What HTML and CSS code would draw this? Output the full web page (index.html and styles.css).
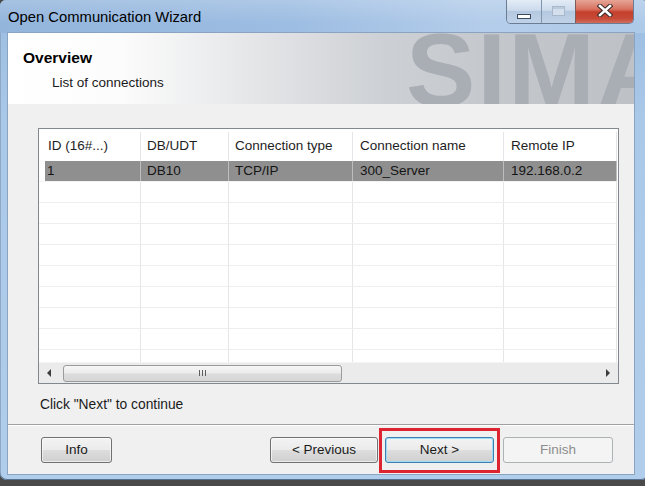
FILE: index.html
```html
<!DOCTYPE html>
<html>
<head>
<meta charset="utf-8">
<link rel="stylesheet" href="styles.css">
</head>
<body>
<div class="window">
  <div class="titlebar">
    <span class="title">Open Communication Wizard</span>
    <div class="caption">
      <div class="cb cb-min"><span class="min-glyph"></span></div>
      <div class="cb cb-max"><span class="max-glyph"></span></div>
      <div class="cb cb-close">
        <svg width="16" height="13" viewBox="0 0 16 13">
          <path d="M3 2 L13 11 M13 2 L3 11" stroke="#3b2b2b" stroke-width="4.6" stroke-linecap="square" fill="none"/>
          <path d="M3 2 L13 11 M13 2 L3 11" stroke="#ffffff" stroke-width="2.6" stroke-linecap="square" fill="none"/>
        </svg>
      </div>
    </div>
  </div>
  <div class="client">
    <div class="header">
      <div class="watermark">SIMA</div>
      <div class="h-title">Overview</div>
      <div class="h-sub">List of connections</div>
    </div>
    <div class="content">
      <div class="grid">
        <div class="row head">
          <div class="spacer"></div>
          <div class="cell c1">ID (16#...)</div>
          <div class="cell c2">DB/UDT</div>
          <div class="cell c3">Connection type</div>
          <div class="cell c4">Connection name</div>
          <div class="cell c5">Remote IP</div>
        </div>
        <div class="rows">
          <div class="row data selected">
            <div class="spacer"></div>
            <div class="cell c1">1</div>
            <div class="cell c2">DB10</div>
            <div class="cell c3">TCP/IP</div>
            <div class="cell c4">300_Server</div>
            <div class="cell c5">192.168.0.2</div>
          </div>
          <div class="row data"><div class="spacer"></div><div class="cell c1"></div><div class="cell c2"></div><div class="cell c3"></div><div class="cell c4"></div><div class="cell c5"></div></div>
          <div class="row data"><div class="spacer"></div><div class="cell c1"></div><div class="cell c2"></div><div class="cell c3"></div><div class="cell c4"></div><div class="cell c5"></div></div>
          <div class="row data"><div class="spacer"></div><div class="cell c1"></div><div class="cell c2"></div><div class="cell c3"></div><div class="cell c4"></div><div class="cell c5"></div></div>
          <div class="row data"><div class="spacer"></div><div class="cell c1"></div><div class="cell c2"></div><div class="cell c3"></div><div class="cell c4"></div><div class="cell c5"></div></div>
          <div class="row data"><div class="spacer"></div><div class="cell c1"></div><div class="cell c2"></div><div class="cell c3"></div><div class="cell c4"></div><div class="cell c5"></div></div>
          <div class="row data"><div class="spacer"></div><div class="cell c1"></div><div class="cell c2"></div><div class="cell c3"></div><div class="cell c4"></div><div class="cell c5"></div></div>
          <div class="row data"><div class="spacer"></div><div class="cell c1"></div><div class="cell c2"></div><div class="cell c3"></div><div class="cell c4"></div><div class="cell c5"></div></div>
          <div class="row data"><div class="spacer"></div><div class="cell c1"></div><div class="cell c2"></div><div class="cell c3"></div><div class="cell c4"></div><div class="cell c5"></div></div>
          <div class="row data"><div class="spacer"></div><div class="cell c1"></div><div class="cell c2"></div><div class="cell c3"></div><div class="cell c4"></div><div class="cell c5"></div></div>
        </div>
        <div class="hscroll">
          <div class="arrow-btn"><span class="tri-left"></span></div>
          <div class="thumb"><span class="grip"></span></div>
          <div class="track-rest"></div>
          <div class="arrow-btn"><span class="tri-right"></span></div>
        </div>
      </div>
      <div class="hint">Click "Next" to continue</div>
    </div>
    <div class="footer">
      <button class="btn btn-info">Info</button>
      <div class="nav">
        <button class="btn btn-prev">&lt; Previous</button>
        <div class="highlight"><button class="btn btn-next">Next &gt;</button></div>
        <button class="btn btn-finish" disabled>Finish</button>
      </div>
    </div>
  </div>
</div>
</body>
</html>
```

FILE: styles.css
```css
html, body {
  margin: 0;
  padding: 0;
}
body {
  width: 645px;
  height: 486px;
  overflow: hidden;
  background: #4a4a4a;
  font-family: "Liberation Sans", Arial, sans-serif;
  color: #1a1a1a;
}

.window {
  width: 648px;
  height: 480px;
  display: flex;
  flex-direction: column;
  background: linear-gradient(180deg, #a8c5e6 0px, #9fc0e3 33px, #aac8e8 120px, #b0cdeb 480px);
  border-radius: 6px 6px 7px 7px;
  box-shadow: inset 0 -1px 0 #56708f, inset 1px 0 0 #8ea9c8;
}

.titlebar {
  height: 33px;
  display: flex;
  align-items: flex-start;
  background:
    linear-gradient(180deg, rgba(255,255,255,0.18) 0%, rgba(255,255,255,0) 70%),
    linear-gradient(90deg, #93b5dc 0%, #9dbde2 45%, #b4cdea 75%, #aecae9 100%);
  border-radius: 6px 6px 0 0;
}
.title {
  padding-left: 8px;
  padding-top: 9px;
  font-size: 14.8px;
  line-height: 16px;
  color: #000;
}

.caption {
  margin-left: auto;
  margin-right: 14px;
  height: 24px;
  display: flex;
  border: 1px solid #6b7d95;
  border-top: none;
  border-radius: 0 0 5px 5px;
  overflow: hidden;
  box-sizing: border-box;
}
.cb {
  height: 100%;
  display: flex;
  align-items: center;
  justify-content: center;
  box-sizing: border-box;
}
.cb-min {
  width: 35px;
  background: linear-gradient(180deg, #e3ecf6 0%, #cbdaec 45%, #b4c8df 50%, #bfd2e8 100%);
  border-right: 1px solid #8095ae;
  align-items: flex-end;
}
.min-glyph {
  width: 12px;
  height: 3px;
  background: #fff;
  border: 1px solid #3a4a60;
  margin-bottom: 4px;
}
.cb-max {
  width: 34px;
  background: linear-gradient(180deg, #e3ecf6 0%, #cbdaec 45%, #b4c8df 50%, #bfd2e8 100%);
  border-right: 1px solid #7b5c5a;
}
.max-glyph {
  width: 11px;
  height: 8px;
  border: 1px solid #a9b8ca;
  background: #d3dfec;
  box-shadow: inset 0 2px 0 #bccbdc;
  margin-top: -2px;
}
.cb-close {
  width: 57px;
  background: linear-gradient(180deg, #e6a596 0%, #d9715f 40%, #c4402c 52%, #c64a37 80%, #d26c5c 100%);
}
.cb-close svg {
  margin-top: -3px;
}

.client {
  margin: 0 14px 0 8px;
  height: 441px;
  background: #f0f0f0;
  box-shadow: 0 0 0 1px #8aa3c1;
  display: flex;
  flex-direction: column;
}

.header {
  position: relative;
  height: 71px;
  overflow: hidden;
  background: linear-gradient(90deg, #ffffff 0%, #fcfcfc 18%, #e6e7e9 38%, #cdd0d4 60%, #c3c6cb 80%, #bec1c6 100%);
  padding-left: 15px;
  box-sizing: border-box;
}
.watermark {
  position: absolute;
  left: 398px;
  top: -15px;
  font-size: 104px;
  line-height: 1;
  font-weight: bold;
  color: #a9adb4;
  letter-spacing: 2px;
  white-space: nowrap;
}
.h-title {
  position: relative;
  padding-top: 16px;
  font-size: 15.5px;
  line-height: 18px;
  font-weight: bold;
  color: #000;
}
.h-sub {
  position: relative;
  padding-left: 29px;
  padding-top: 8px;
  font-size: 13.5px;
  line-height: 16px;
  color: #1a1a1a;
}

.content {
  padding: 24px 0 0 30px;
  flex: 1;
}

.grid {
  width: 581px;
  height: 256px;
  box-sizing: border-box;
  border: 1px solid #828790;
  background: #fff;
  display: flex;
  flex-direction: column;
}
.row {
  display: flex;
  flex-shrink: 0;
}
.spacer {
  width: 6px;
  flex-shrink: 0;
}
.cell {
  box-sizing: border-box;
  flex-shrink: 0;
  padding-left: 6px;
  font-size: 13.5px;
  white-space: nowrap;
  overflow: hidden;
  border-right: 1px solid #e6e6e6;
}
.c1 { width: 96px; padding-left: 3px; }
.c2 { width: 88px; }
.c3 { width: 124px; }
.c4 { width: 151px; padding-left: 7px; }
.c5 { width: 113px; padding-left: 7px; }

.head {
  height: 32px;
  align-items: stretch;
}
.head .cell {
  line-height: 32px;
  padding-top: 1px;
  border-right: none;
  background: linear-gradient(90deg, transparent calc(100% - 1px), #e3e5e8 calc(100% - 1px)) no-repeat 0 3px / 100% 100%;
  color: #1e1e1e;
}
.head .c1 { padding-left: 3px; }

.rows {
  height: 201px;
  overflow: hidden;
  display: flex;
  flex-direction: column;
}
.data {
  height: 21px;
  border-bottom: 1px solid #eeeeee;
  box-sizing: border-box;
}
.data .cell {
  line-height: 20px;
  height: 20px;
}
.selected {
  border-bottom: 1px solid #f2f2f2;
}
.selected .cell {
  background: #8f8f8f;
  border-right: 1px solid #bdbdbd;
  color: #151515;
}
.selected .c1 { padding-left: 2px; }

.hscroll {
  height: 21px;
  margin-top: auto;
  display: flex;
  align-items: center;
  background: #ebebeb;
  border-top: 1px solid #f4f4f4;
  box-sizing: border-box;
  padding: 0 1px 0 0;
}
.arrow-btn {
  width: 22px;
  height: 100%;
  display: flex;
  align-items: center;
  justify-content: center;
  flex-shrink: 0;
}
.tri-left {
  width: 0;
  height: 0;
  border-top: 4px solid transparent;
  border-bottom: 4px solid transparent;
  border-right: 4px solid #3d3d3d;
  margin-left: -2px;
}
.tri-right {
  width: 0;
  height: 0;
  border-top: 4px solid transparent;
  border-bottom: 4px solid transparent;
  border-left: 4px solid #3d3d3d;
  margin-left: 4px;
}
.thumb {
  width: 279px;
  height: 17px;
  margin-left: 2px;
  box-sizing: border-box;
  border: 1px solid #9b9b9b;
  border-radius: 3px;
  background: linear-gradient(180deg, #f6f6f6 0%, #ececec 45%, #dcdcdc 55%, #d6d6d6 100%);
  display: flex;
  align-items: center;
  justify-content: center;
}
.grip {
  width: 7px;
  height: 6px;
  background: repeating-linear-gradient(90deg, #5f5f5f 0 1px, transparent 1px 3px);
}
.track-rest {
  flex: 1;
}

.hint {
  margin-top: 13px;
  margin-left: 2px;
  font-size: 13.8px;
  line-height: 16px;
  color: #1a1a1a;
}

.footer {
  height: 50px;
  box-sizing: border-box;
  border-top: 1px solid #a0a0a0;
  box-shadow: inset 0 1px 0 #ffffff;
  display: flex;
  align-items: flex-start;
  padding: 12px 0 0 33px;
}
.nav {
  display: flex;
  align-items: center;
  margin-left: 158px;
}
.btn {
  height: 26px;
  box-sizing: border-box;
  border: 1px solid #707070;
  border-radius: 3px;
  background: linear-gradient(180deg, #f3f3f3 0%, #ebebeb 48%, #dddddd 52%, #cfcfcf 100%);
  box-shadow: inset 0 0 0 1px rgba(255,255,255,0.6);
  font-family: "Liberation Sans", Arial, sans-serif;
  font-size: 13.5px;
  color: #1a1a1a;
  padding: 0;
  line-height: 24px;
}
.btn-info { width: 71px; }
.btn-prev { width: 108px; }
.highlight {
  margin-left: 1px;
  padding: 6px 3px 7px 3px;
  border: 3px solid #dc2530;
  margin-top: -9px;
  margin-bottom: -10px;
  display: flex;
}
.btn-next {
  width: 109px;
  border-color: #3c7fb1;
  box-shadow: inset 0 0 0 1px #9fdbf7;
  background: linear-gradient(180deg, #f3f3f3 0%, #ebebeb 48%, #dddddd 52%, #cfcfcf 100%);
}
.btn-finish {
  width: 110px;
  margin-left: 3px;
  border-color: #adb2b5;
  background: #f4f4f4;
  color: #8d8d8d;
  box-shadow: none;
}
```
